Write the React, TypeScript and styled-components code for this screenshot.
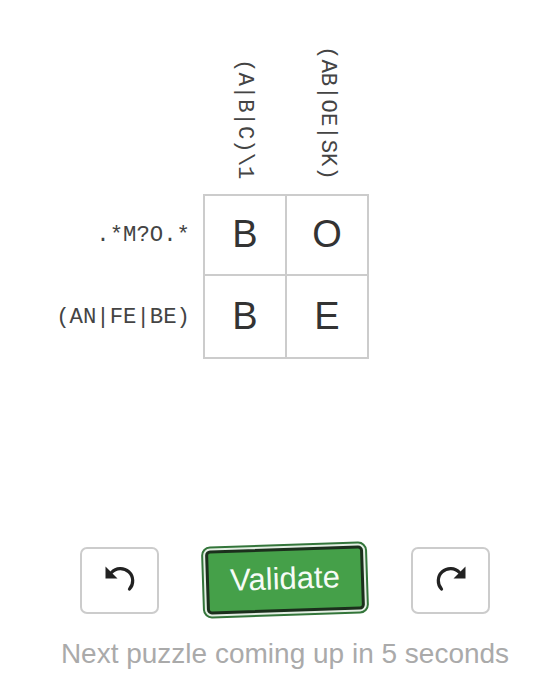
import React from 'react';
import styled, { createGlobalStyle } from 'styled-components';

const GlobalStyle = createGlobalStyle`
  html, body {
    margin: 0;
    padding: 0;
    background: #ffffff;
  }
  body {
    font-family: "Liberation Sans", Arial, sans-serif;
  }
`;

const Page = styled.div`
  width: 556px;
  height: 686px;
  box-sizing: border-box;
  padding: 46px 0 0 14px;
  display: flex;
  flex-direction: column;
  align-items: center;
`;

const Board = styled.div`
  align-self: flex-start;
  margin-left: 29px;
  display: grid;
  grid-template-columns: 160px 84px 82px;
  grid-template-rows: auto 82px 83px;
`;

const Corner = styled.div``;

const ColLabel = styled.div`
  writing-mode: vertical-rl;
  font-family: "Liberation Mono", monospace;
  font-size: 22.3px;
  line-height: 1;
  color: #444;
  display: flex;
  align-items: center;
  justify-content: flex-end;
  padding-bottom: 14px;
  white-space: nowrap;
`;

const RowLabel = styled.div`
  font-family: "Liberation Mono", monospace;
  font-size: 22.3px;
  color: #444;
  display: flex;
  align-items: center;
  justify-content: flex-end;
  padding-right: 13px;
  white-space: nowrap;
`;

const Cell = styled.div<{ $top: boolean; $left: boolean }>`
  border-right: 2px solid #cccccc;
  border-bottom: 2px solid #cccccc;
  border-top: ${({ $top }) => ($top ? '2px solid #cccccc' : 'none')};
  border-left: ${({ $left }) => ($left ? '2px solid #cccccc' : 'none')};
  display: flex;
  align-items: center;
  justify-content: center;
  font-size: 38px;
  color: #333;
`;

const Controls = styled.div`
  margin-top: 188px;
  display: flex;
  align-items: center;
  gap: 43px;
`;

const IconButton = styled.button`
  width: 79px;
  height: 67px;
  box-sizing: border-box;
  border: 2px solid #cccccc;
  border-radius: 7px;
  background: #ffffff;
  display: flex;
  align-items: center;
  justify-content: center;
  padding: 0;
  color: #222;
`;

const ValidateButton = styled.button`
  width: 158px;
  height: 64px;
  box-sizing: border-box;
  margin: 0 4px;
  border: 3px solid #1b2f1c;
  border-radius: 5px;
  background: #45a049;
  box-shadow: 0 0 0 2px #e4efe4, 0 0 0 4px #33753a;
  color: #f6fbf6;
  font-family: "Liberation Sans", Arial, sans-serif;
  font-size: 31px;
  transform: rotate(-1.9deg);
  padding: 0 0 2px;
`;

const Notice = styled.div`
  margin-top: 24px;
  font-size: 28px;
  color: #aaaaaa;
`;

const TurnIcon = ({ flip }: { flip?: boolean }) => (
  <svg
    width="32"
    height="30"
    viewBox="0 0 32 30"
    style={{ marginTop: -3, transform: flip ? 'scaleX(-1)' : undefined }}
  >
    <path
      d="M7.5 8.5 A12 12 0 1 1 25.5 25"
      fill="none"
      stroke="currentColor"
      strokeWidth="3.2"
      strokeLinecap="round"
    />
    <polygon points="1.5,2.5 1.5,14.5 13.5,14.5" fill="currentColor" />
  </svg>
);

const cols = ['(A|B|C)\\1', '(AB|OE|SK)'];
const rows = [
  { label: '.*M?O.*', cells: ['B', 'O'] },
  { label: '(AN|FE|BE)', cells: ['B', 'E'] },
];

export default function App() {
  return (
    <>
      <GlobalStyle />
      <Page>
        <Board>
          <Corner />
          {cols.map((c) => (
            <ColLabel key={c}>{c}</ColLabel>
          ))}
          {rows.map((r, ri) => (
            <React.Fragment key={r.label}>
              <RowLabel>{r.label}</RowLabel>
              {r.cells.map((v, ci) => (
                <Cell key={ci} $top={ri === 0} $left={ci === 0}>
                  {v}
                </Cell>
              ))}
            </React.Fragment>
          ))}
        </Board>
        <Controls>
          <IconButton>
            <TurnIcon />
          </IconButton>
          <ValidateButton>Validate</ValidateButton>
          <IconButton>
            <TurnIcon flip />
          </IconButton>
        </Controls>
        <Notice>Next puzzle coming up in 5 seconds</Notice>
      </Page>
    </>
  );
}
